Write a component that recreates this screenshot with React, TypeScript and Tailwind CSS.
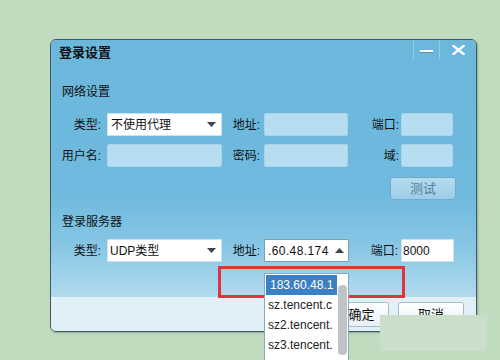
const font = "font-['Liberation_Sans','Noto_Sans_CJK_SC',sans-serif]";

const DownArrow = () => (
  <svg width="9" height="5" viewBox="0 0 9 5" className="shrink-0">
    <polygon points="0,0 9,0 4.5,5" fill="#3c4650" />
  </svg>
);

const UpArrow = () => (
  <svg width="9" height="5" viewBox="0 0 9 5" className="shrink-0">
    <polygon points="0,5 9,5 4.5,0" fill="#3c4650" />
  </svg>
);

const Label = ({ text, w }: { text: string; w: string }) => (
  <span className={`${w} shrink-0 text-right text-[12px] leading-[14px] text-[#111]`}>{text}</span>
);

const Field = ({ w, ml }: { w: string; ml: string }) => (
  <div className={`${w} ${ml} h-[23px] shrink-0 rounded-[2px] border border-[#a9d5ea] bg-[#b6def0]`} />
);

const Select = ({ value, tight }: { value: string; tight?: boolean }) => (
  <div className="ml-[6px] flex h-[23px] w-[115px] shrink-0 items-center justify-between rounded-[1px] border border-[#c8e4f2] bg-white pr-[5px]">
    <span className={`text-[12px] leading-[14px] text-[#111] ${tight ? "pl-[2px]" : "pl-[3px]"}`}>{value}</span>
    <DownArrow />
  </div>
);

const dropItems = ["sz.tencent.c", "sz2.tencent.", "sz3.tencent."];

export default function App() {
  return (
    <div className={`relative h-[360px] w-[500px] overflow-hidden bg-[#c1dbbf] pl-[50px] pt-[39px] ${font}`}>
      {/* dialog */}
      <div className="flex h-[293px] w-[427px] flex-col overflow-hidden rounded-[6px] border border-[#3e5a67] shadow-[1px_1px_2px_rgba(60,80,70,0.35)]">
        <div className="flex h-[257px] flex-col bg-[linear-gradient(to_bottom,#6bb8dc_0%,#6fbade_60%,#87c6e4_80%,#b2daee_100%)]">
          {/* title bar */}
          <div className="flex h-[25px] items-start">
            <span className="ml-[8px] mt-[5px] text-[13px] font-bold leading-[15px] text-[#111]">登录设置</span>
            <div className="ml-auto flex h-[19px]">
              <div className="flex w-[26px] items-center justify-center border-l border-[#94cbe6]">
                <div className="mt-[2px] h-[2px] w-[13px] bg-white shadow-[0_1px_0_#5d8fa8]" />
              </div>
              <div className="flex w-[37px] items-center justify-center border-l border-[#94cbe6]">
                <svg width="13" height="10" viewBox="0 0 13 10">
                  <path d="M1.5 1 L11.5 9 M11.5 1 L1.5 9" stroke="#fff" strokeWidth="2.4" strokeLinecap="square" />
                </svg>
              </div>
            </div>
          </div>

          <div className="ml-[11px] mt-[19px] text-[12px] leading-[16px] text-[#111]">网络设置</div>

          {/* row 1 */}
          <div className="mt-[13px] flex items-center">
            <Label text="类型:" w="w-[50px]" />
            <Select value="不使用代理" />
            <Label text="地址:" w="ml-[10px] w-[28px]" />
            <Field w="w-[84px]" ml="ml-[4px]" />
            <Label text="端口:" w="w-[51px]" />
            <Field w="w-[52px]" ml="ml-[2px]" />
          </div>

          {/* row 2 */}
          <div className="mt-[8px] flex items-center">
            <Label text="用户名:" w="w-[50px]" />
            <Field w="w-[115px]" ml="ml-[6px]" />
            <Label text="密码:" w="ml-[10px] w-[28px]" />
            <Field w="w-[84px]" ml="ml-[4px]" />
            <Label text="域:" w="w-[51px]" />
            <Field w="w-[52px]" ml="ml-[2px]" />
          </div>

          <div className="mr-[20px] mt-[10px] flex justify-end">
            <button className="flex h-[23px] w-[66px] items-center justify-center rounded-[3px] border border-[#72abc9] bg-[linear-gradient(to_bottom,#b4dcef,#9ccde6)] text-[13px] text-[#55809a]">
              测试
            </button>
          </div>

          <div className="ml-[11px] mt-[14px] text-[12px] leading-[16px] text-[#111]">登录服务器</div>

          {/* row 3 */}
          <div className="mt-[9px] flex items-center">
            <Label text="类型:" w="w-[50px]" />
            <Select value="UDP类型" tight />
            <Label text="地址:" w="ml-[8px] w-[30px]" />
            <div className="ml-[4px] flex h-[23px] w-[85px] shrink-0 items-center justify-between rounded-[1px] border border-[#7d9fb6] bg-white pl-[3px] pr-[4px]">
              <span className="text-[12px] leading-[14px] tracking-[0.4px] text-[#111]">.60.48.174</span>
              <UpArrow />
            </div>
            <Label text="端口:" w="w-[49px]" />
            <div className="ml-[3px] flex h-[23px] w-[53px] shrink-0 items-center rounded-[1px] border border-[#c8e4f2] bg-white pl-[1px]">
              <span className="text-[12px] leading-[14px] text-[#111]">8000</span>
            </div>
          </div>
        </div>

        {/* bottom strip */}
        <div className="flex flex-1 items-start justify-end gap-[9px] bg-[#e1eff7] pr-[12px] pt-[5px]">
          <button className="flex h-[25px] w-[63px] items-center justify-center rounded-[3px] border border-[#a9bcc9] bg-[linear-gradient(to_bottom,#ffffff,#e8f0f5)] pl-[8px] text-[13px] text-[#111]">
            确定
          </button>
          <button className="flex h-[25px] w-[66px] items-center justify-center rounded-[3px] border border-[#a9bcc9] bg-[linear-gradient(to_bottom,#ffffff,#e8f0f5)] text-[13px] text-[#111]">
            取消
          </button>
        </div>
      </div>

      {/* red highlight frame */}
      <div className="absolute left-[218px] top-[266px] h-[32px] w-[187px] border-[3px] border-[#e2313f]" />

      {/* dropdown list */}
      <div className="absolute left-[264px] top-[273px] h-[100px] w-[85px] border border-[#8aa6ba] bg-white p-[1px]">
        <div className="flex">
          <div className="flex w-[71px] flex-col">
            <div className="flex h-[20px] items-center bg-[#3b7fc4] pl-[4px] text-[12px] text-white">183.60.48.1</div>
            {dropItems.map((t) => (
              <div key={t} className="flex h-[20px] items-center pl-[2px] text-[12px] text-[#222]">
                {t}
              </div>
            ))}
          </div>
          <div className="ml-[1px] w-[9px] pt-[10px]">
            <div className="h-[70px] w-[9px] rounded-[4px] bg-[#bfc3c6]" />
          </div>
        </div>
      </div>

      {/* pale overlay patch */}
      <div className="absolute left-[380px] top-[315px] h-[36px] w-[107px] bg-[#cbdec9]" />
    </div>
  );
}
